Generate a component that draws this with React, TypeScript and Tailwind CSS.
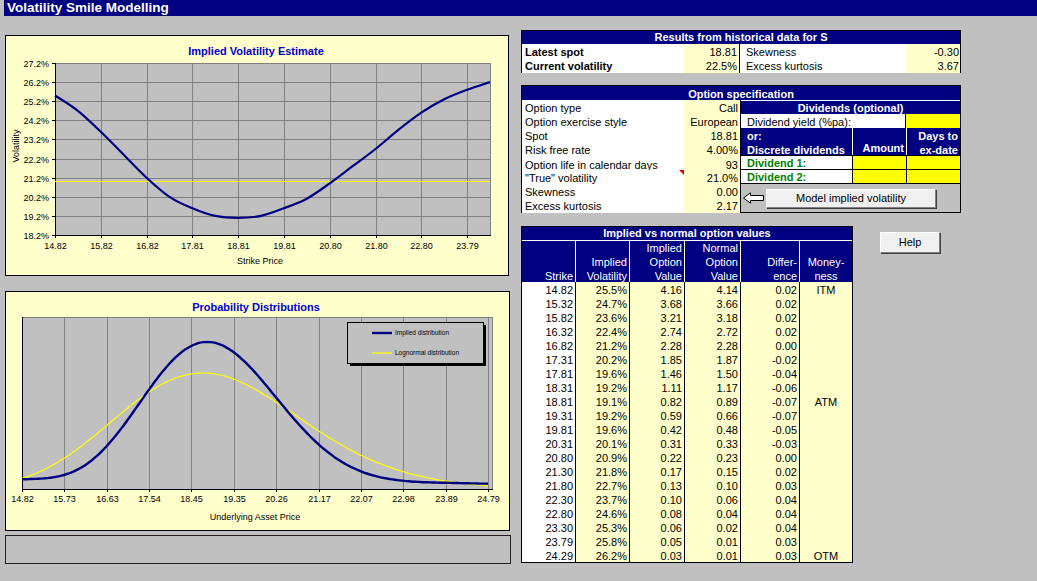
import React from 'react';

type Pt = [number, number];

const strikes = [14.82, 15.32, 15.82, 16.32, 16.82, 17.31, 17.81, 18.31, 18.81, 19.31, 19.81, 20.31, 20.8, 21.3, 21.8, 22.3, 22.8, 23.3, 23.79, 24.29];
const impliedVols = [25.5, 24.7, 23.6, 22.4, 21.2, 20.2, 19.6, 19.2, 19.1, 19.2, 19.6, 20.1, 20.9, 21.8, 22.7, 23.7, 24.6, 25.3, 25.8, 26.2];
const impliedValues = ['4.16', '3.68', '3.21', '2.74', '2.28', '1.85', '1.46', '1.11', '0.82', '0.59', '0.42', '0.31', '0.22', '0.17', '0.13', '0.10', '0.08', '0.06', '0.05', '0.03'];
const normalValues = ['4.14', '3.66', '3.18', '2.72', '2.28', '1.87', '1.50', '1.17', '0.89', '0.66', '0.48', '0.33', '0.23', '0.15', '0.10', '0.06', '0.04', '0.02', '0.01', '0.01'];
const differences = ['0.02', '0.02', '0.02', '0.02', '0.00', '-0.02', '-0.04', '-0.06', '-0.07', '-0.07', '-0.05', '-0.03', '0.00', '0.02', '0.03', '0.04', '0.04', '0.04', '0.03', '0.03'];
const moneyness: Record<number, string> = { 0: 'ITM', 8: 'ATM', 19: 'OTM' };

const smoothPath = (pts: Pt[]) => {
  let d = `M${pts[0][0].toFixed(1)},${pts[0][1].toFixed(1)}`;
  for (let i = 0; i < pts.length - 1; i++) {
    const p0 = pts[i - 1] || pts[i];
    const p1 = pts[i];
    const p2 = pts[i + 1];
    const p3 = pts[i + 2] || p2;
    const c1x = p1[0] + (p2[0] - p0[0]) / 6;
    const c1y = p1[1] + (p2[1] - p0[1]) / 6;
    const c2x = p2[0] - (p3[0] - p1[0]) / 6;
    const c2y = p2[1] - (p3[1] - p1[1]) / 6;
    d += ` C${c1x.toFixed(1)},${c1y.toFixed(1)} ${c2x.toFixed(1)},${c2y.toFixed(1)} ${p2[0].toFixed(1)},${p2[1].toFixed(1)}`;
  }
  return d;
};

const VolChart = () => {
  const x0 = 55, x1 = 490, y0 = 63, y1 = 235;
  const xs = (i: number) => x0 + (i * (x1 - x0)) / 19;
  const yv = (v: number) => y0 + ((27.2 - v) / 9) * (y1 - y0);
  const pts: Pt[] = impliedVols.map((v, i) => [xs(i), yv(v)]);
  const levels = Array.from({ length: 10 }, (_, k) => 27.2 - k);
  const labelIdx = [0, 2, 4, 6, 8, 10, 12, 14, 16, 18];

  return (
    <svg width={502} height={239} viewBox="6 36 502 239" className="block" fontFamily="'Liberation Sans', Arial, sans-serif">
      <text x={256} y={55} textAnchor="middle" fontSize={11} fontWeight="bold" fill="#0000cc">
        Implied Volatility Estimate
      </text>
      <rect x={x0 + 0.5} y={y0 + 0.5} width={x1 - x0} height={y1 - y0} fill="#c0c0c0" stroke="#808080" />
      {levels.map((v, k) => {
        const y = Math.round(yv(v)) + 0.5;
        return (
          <g key={k}>
            <line x1={x0} x2={x1} y1={y} y2={y} stroke="#808080" />
            <line x1={x0 - 3} x2={x0} y1={y} y2={y} stroke="#000" />
            <text x={x0 - 6} y={y + 3.2} textAnchor="end" fontSize={9}>
              {v.toFixed(1)}%
            </text>
          </g>
        );
      })}
      {labelIdx.map((i) => {
        const x = Math.round(xs(i)) + 0.5;
        return (
          <g key={i}>
            {i > 0 && <line x1={x} x2={x} y1={y0} y2={y1} stroke="#808080" />}
            <line x1={x} x2={x} y1={y1} y2={y1 + 3} stroke="#000" />
            <text x={x} y={249} textAnchor="middle" fontSize={9}>
              {strikes[i].toFixed(2)}
            </text>
          </g>
        );
      })}
      <line x1={x0 + 0.5} x2={x0 + 0.5} y1={y0} y2={y1 + 1} stroke="#000" />
      <line x1={x0} x2={x1 + 1} y1={y1 + 0.5} y2={y1 + 0.5} stroke="#000" />
      <line x1={x0} x2={x1} y1={yv(21.0)} y2={yv(21.0)} stroke="#ffff00" strokeWidth={1.2} />
      <path d={smoothPath(pts)} fill="none" stroke="#000080" strokeWidth={2.2} strokeLinejoin="round" />
      <text x={260} y={264} textAnchor="middle" fontSize={9}>
        Strike Price
      </text>
      <text transform="translate(18.5 146) rotate(-90)" textAnchor="middle" fontSize={9}>
        Volatility
      </text>
    </svg>
  );
};

const ProbChart = () => {
  const x0 = 22, x1 = 492, y0 = 317, y1 = 489;
  const pmin = 14.82, pmax = 24.79;
  const px = (p: number) => x0 + ((p - pmin) / (pmax - pmin)) * 466;
  const S = 18.81, sig = 0.21, T = 93 / 365, r = 0.04, k = 2.17;
  const s = sig * Math.sqrt(T);
  const mu = Math.log(S) + (r - (sig * sig) / 2) * T;
  const dens = (p: number) => Math.exp(-((Math.log(p) - mu) ** 2) / (2 * s * s)) / (p * s * Math.sqrt(2 * Math.PI));
  const impl = (p: number) => {
    const z = (Math.log(p) - mu) / s;
    return dens(p) * (1 + (k / 24) * (z ** 4 - 6 * z * z + 3));
  };
  const samples = Array.from({ length: 101 }, (_, j) => pmin + (j * (pmax - pmin)) / 100);
  const fmax = Math.max(...samples.map(dens));
  const yd = (f: number) => y1 - (f / fmax) * 116;
  const logPts: Pt[] = samples.map((p) => [px(p), yd(dens(p))]);
  const implPts: Pt[] = samples.map((p) => [px(p), yd(impl(p))]);
  const labels = ['14.82', '15.73', '16.63', '17.54', '18.45', '19.35', '20.26', '21.17', '22.07', '22.98', '23.89', '24.79'];

  return (
    <svg width={503} height={238} viewBox="6 292 503 238" className="block" fontFamily="'Liberation Sans', Arial, sans-serif">
      <text x={256} y={311} textAnchor="middle" fontSize={11} fontWeight="bold" fill="#0000cc">
        Probability Distributions
      </text>
      <rect x={x0 + 0.5} y={y0 + 0.5} width={x1 - x0} height={y1 - y0} fill="#c0c0c0" stroke="#808080" />
      {labels.map((l, i) => {
        const x = Math.round(x0 + (i * 466) / 11) + 0.5;
        return (
          <g key={l}>
            {i > 0 && <line x1={x} x2={x} y1={y0} y2={y1} stroke="#808080" />}
            <line x1={x} x2={x} y1={y1} y2={y1 + 3} stroke="#000" />
            <text x={x} y={501.5} textAnchor="middle" fontSize={9}>
              {l}
            </text>
          </g>
        );
      })}
      <line x1={x0 + 0.5} x2={x0 + 0.5} y1={y0} y2={y1 + 1} stroke="#000" />
      <line x1={x0} x2={x1 + 1} y1={y1 + 0.5} y2={y1 + 0.5} stroke="#000" />
      <path d={smoothPath(logPts)} fill="none" stroke="#ffff00" strokeWidth={1.2} />
      <path d={smoothPath(implPts)} fill="none" stroke="#000080" strokeWidth={2.4} strokeLinejoin="round" />
      <rect x={350} y={325} width={136} height={41} fill="#000" />
      <rect x={347.5} y={322.5} width={136} height={41} fill="#c0c0c0" stroke="#000" />
      <line x1={372} x2={392} y1={333} y2={333} stroke="#000080" strokeWidth={2.4} />
      <text x={395} y={335} fontSize={6.5} textLength={54} lengthAdjust="spacingAndGlyphs">
        Implied distribution
      </text>
      <line x1={372} x2={392} y1={353} y2={353} stroke="#ffff00" strokeWidth={1.2} />
      <text x={395} y={355} fontSize={6.5} textLength={64} lengthAdjust="spacingAndGlyphs">
        Lognormal distribution
      </text>
      <text x={255} y={520} textAnchor="middle" fontSize={9}>
        Underlying Asset Price
      </text>
    </svg>
  );
};

const LeftArrow = () => (
  <svg width={21} height={12} viewBox="0 0 21 12" className="block shrink-0">
    <polygon points="0.5,6 7.5,0.8 7.5,3.5 20.5,3.5 20.5,8.5 7.5,8.5 7.5,11.2" fill="#fff" stroke="#000" strokeWidth={1} />
  </svg>
);

const btn =
  'border border-t-white border-l-white border-r-[#808080] border-b-[#808080] bg-[#f0f0f0] shadow-[1px_1px_0_#404040] text-[11px] leading-none text-black';

const resultsRows = [
  { label: 'Latest spot', value: '18.81', label2: 'Skewness', value2: '-0.30' },
  { label: 'Current volatility', value: '22.5%', label2: 'Excess kurtosis', value2: '3.67' },
];

const specRows = [
  { label: 'Option type', value: 'Call' },
  { label: 'Option exercise style', value: 'European' },
  { label: 'Spot', value: '18.81' },
  { label: 'Risk free rate', value: '4.00%' },
  { label: 'Option life in calendar days', value: '93' },
  { label: '"True" volatility', value: '21.0%' },
  { label: 'Skewness', value: '0.00' },
  { label: 'Excess kurtosis', value: '2.17' },
];

const headerCols = [
  { lines: ['Strike'] },
  { lines: ['Implied', 'Volatility'] },
  { lines: ['Implied', 'Option', 'Value'] },
  { lines: ['Normal', 'Option', 'Value'] },
  { lines: ['Differ-', 'ence'] },
  { lines: ['Money-', 'ness'], center: true },
];

export default function App() {
  return (
    <div className="h-[581px] w-[1037px] overflow-hidden bg-[#c0c0c0] font-['Liberation_Sans',Arial,sans-serif] text-[11px] leading-[14px] text-black">
      {/* Title bar */}
      <div className="ml-[4px] h-[16px] bg-[#000080] pl-[3px] text-[13.5px] font-bold leading-[16px] text-white">
        Volatility Smile Modelling
      </div>

      <div className="flex">
        {/* Charts */}
        <div className="w-[521px] shrink-0 pl-[5px]">
          <div className="mt-[19px] h-[241px] w-[504px] border border-black bg-[#ffffcc]">
            <VolChart />
          </div>
          <div className="mt-[15px] h-[240px] w-[505px] border border-black bg-[#ffffcc]">
            <ProbChart />
          </div>
          <div className="mt-[4px] h-[29px] w-[506px] border border-[#202020]" />
        </div>

        {/* Tables */}
        <div className="flex flex-col">
          {/* Historical results */}
          <div className="mt-[14px] w-[440px] border border-black">
            <div className="h-[13px] bg-[#000080] text-center font-bold leading-[13px] text-white">
              Results from historical data for S
            </div>
            {resultsRows.map((r) => (
              <div key={r.label} className="grid h-[14px] grid-cols-[162px_56px_166px_54px]">
                <div className="bg-white pl-[3px] pt-[1px] font-bold">{r.label}</div>
                <div className="border-r border-black bg-[#ffffcc] pr-[2px] pt-[1px] text-right">{r.value}</div>
                <div className="bg-white pl-[6px] pt-[1px]">{r.label2}</div>
                <div className="bg-[#ffffcc] pr-[1px] pt-[1px] text-right">{r.value2}</div>
              </div>
            ))}
          </div>

          {/* Option specification */}
          <div className="mt-[12px] w-[440px] border border-black">
            <div className="h-[14px] bg-[#000080] pt-[1px] text-center font-bold text-white">Option specification</div>
            <div className="flex">
              <div className="w-[218px]">
                {specRows.map((r, i) => (
                  <div key={r.label} className={`grid h-[14px] grid-cols-[162px_56px] ${i === 4 ? 'border-t border-black' : ''}`}>
                    <div className="relative bg-white pl-[3px] pt-[1px]">
                      {r.label}
                      {i === 5 && (
                        <span className="absolute right-0 top-0 h-0 w-0 border-l-[5px] border-t-[5px] border-l-transparent border-t-[#e00000]" />
                      )}
                    </div>
                    <div className="bg-[#ffffcc] pr-[2px] pt-[1px] text-right">{r.value}</div>
                  </div>
                ))}
              </div>
              <div className="w-[220px] border-l border-black">
                <div className="h-[14px] border-t border-white bg-[#000080] pt-[1px] text-center font-bold leading-[13px] text-white">
                  Dividends (optional)
                </div>
                <div className="flex h-[14px]">
                  <div className="w-[165px] border-r border-black bg-white pl-[6px] pt-[1px]">Dividend yield (%pa):</div>
                  <div className="flex-1 bg-[#ffff00]" />
                </div>
                <div className="flex h-[28px] border-b border-black bg-[#000080] font-bold text-white">
                  <div className="w-[112px] border-r border-white pl-[6px] pt-[1px]">
                    <div>or:</div>
                    <div>Discrete dividends</div>
                  </div>
                  <div className="flex w-[54px] items-end justify-end border-r border-white pr-[2px]">Amount</div>
                  <div className="flex-1 pr-[2px] pt-[1px] text-right">
                    <div>Days to</div>
                    <div>ex-date</div>
                  </div>
                </div>
                {['Dividend 1:', 'Dividend 2:'].map((d) => (
                  <div key={d} className="flex h-[14px] border-b border-black">
                    <div className="w-[112px] border-r border-black bg-white pl-[6px] pt-[1px] font-bold leading-[13px] text-[#008000]">{d}</div>
                    <div className="w-[54px] border-r border-black bg-[#ffff00]" />
                    <div className="flex-1 bg-[#ffff00]" />
                  </div>
                ))}
                <div className="flex h-[28px] items-center pl-[2px]">
                  <LeftArrow />
                  <button className={`ml-[2px] h-[19px] w-[170px] ${btn}`}>Model implied volatility</button>
                </div>
              </div>
            </div>
          </div>

          {/* Implied vs normal */}
          <div className="mt-[13px] flex items-start">
            <div className="w-[332px] border border-black">
              <div className="h-[13px] bg-[#000080] text-center font-bold leading-[13px] text-white">
                Implied vs normal option values
              </div>
              <div className="grid h-[42px] grid-cols-[54px_54px_55px_56px_59px_52px] border-t border-white bg-[#000080] text-white">
                {headerCols.map((c, i) => (
                  <div
                    key={i}
                    className={`flex flex-col justify-end ${c.center ? 'items-center' : 'items-end pr-[2px]'} ${i < 5 ? 'border-r border-white' : ''}`}
                  >
                    {c.lines.map((l) => (
                      <div key={l}>{l}</div>
                    ))}
                  </div>
                ))}
              </div>
              {strikes.map((k, i) => (
                <div key={k} className="grid h-[14px] grid-cols-[54px_54px_55px_56px_59px_52px]">
                  <div className="border-r border-black bg-white pr-[2px] pt-[2px] text-right leading-[12px]">{k.toFixed(2)}</div>
                  <div className="border-r border-black bg-[#ffffcc] pr-[2px] pt-[2px] text-right leading-[12px]">{impliedVols[i].toFixed(1)}%</div>
                  <div className="border-r border-black bg-[#ffffcc] pr-[2px] pt-[2px] text-right leading-[12px]">{impliedValues[i]}</div>
                  <div className="border-r border-black bg-[#ffffcc] pr-[2px] pt-[2px] text-right leading-[12px]">{normalValues[i]}</div>
                  <div className="border-r border-black bg-[#ffffcc] pr-[2px] pt-[2px] text-right leading-[12px]">{differences[i]}</div>
                  <div className="bg-[#ffffcc] pt-[2px] text-center leading-[12px]">{moneyness[i] || ''}</div>
                </div>
              ))}
            </div>
            <button className={`ml-[27px] mt-[6px] h-[21px] w-[60px] ${btn}`}>Help</button>
          </div>
        </div>
      </div>
    </div>
  );
}
